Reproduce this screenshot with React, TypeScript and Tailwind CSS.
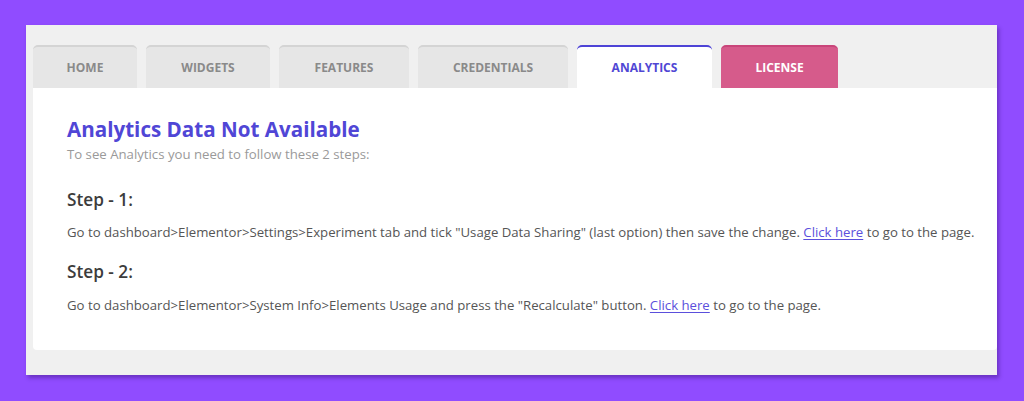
const tabs = [
  { label: "HOME", w: "w-[104px]" },
  { label: "WIDGETS", w: "w-[124px]" },
  { label: "FEATURES", w: "w-[130px]" },
  { label: "CREDENTIALS", w: "w-[150px]" },
];

function Link() {
  return <a href="#" className="text-[#5b4fdc] underline underline-offset-2">Click here</a>;
}

export default function App() {
  return (
    <div className="w-[1024px] h-[401px] bg-[#904cff] pt-[25px] pl-[26px] font-['Open_Sans','Noto_Sans',sans-serif]">
      <div className="w-[971px] h-[350px] bg-[#f0f0f0] shadow-[2px_3px_4px_rgba(60,20,120,0.45)] pl-[7px] pt-[20px]">
        {/* tabs */}
        <div className="flex gap-[9px] h-[43px]">
          {tabs.map((t) => (
            <div
              key={t.label}
              className={`${t.w} h-full bg-[#e6e6e6] border-t-2 border-[#d4d4d4] rounded-t-[5px] flex items-center justify-center text-[12px] font-bold text-[#8a8a8a]`}
            >
              {t.label}
            </div>
          ))}
          <div className="w-[135px] h-full bg-white border-t-2 border-[#4e44d6] rounded-t-[5px] flex items-center justify-center text-[12px] font-bold text-[#5047d4]">
            ANALYTICS
          </div>
          <div className="w-[117px] h-full bg-[#d65b8b] border-t-2 border-[#c9457a] rounded-t-[5px] flex items-center justify-center text-[12px] font-bold text-white">
            LICENSE
          </div>
        </div>

        {/* content */}
        <div className="w-[964px] h-[262px] bg-white rounded-b-[4px] pl-[34px] pt-[28px]">
          <h2 className="text-[20.6px] leading-[27px] font-bold text-[#5046d6]">Analytics Data Not Available</h2>
          <p className="mt-[3px] text-[13.2px] leading-[17px] text-[#9a9a9a]">
            To see Analytics you need to follow these 2 steps:
          </p>

          <h3 className="mt-[26px] text-[17.2px] leading-[21px] font-semibold text-[#3c3c3c]">Step - 1:</h3>
          <p className="mt-[14px] text-[13.2px] leading-[17px] text-[#555]">
            Go to dashboard&gt;Elementor&gt;Settings&gt;Experiment tab and tick "Usage Data Sharing" (last option) then save the change. <Link /> to go to the page.
          </p>

          <h3 className="mt-[20px] text-[17.2px] leading-[21px] font-semibold text-[#3c3c3c]">Step - 2:</h3>
          <p className="mt-[15px] text-[13.2px] leading-[17px] text-[#555]">
            Go to dashboard&gt;Elementor&gt;System Info&gt;Elements Usage and press the "Recalculate" button. <Link /> to go to the page.
          </p>
        </div>
      </div>
    </div>
  );
}
